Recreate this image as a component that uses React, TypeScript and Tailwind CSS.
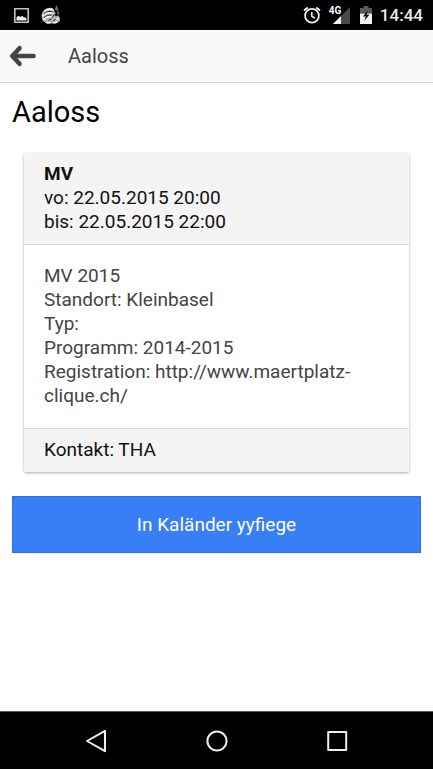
const AlarmIcon = () => (
  <svg viewBox="0 0 18 18" className="h-[18px] w-[18px]" fill="none" stroke="#f0f0f0" aria-hidden="true">
    <circle cx="9" cy="9.8" r="6.9" strokeWidth="1.8" />
    <path d="M1 4.6 4.8 1.4M17 4.6l-3.8-3.2" strokeWidth="2" />
    <path d="M8.8 6v4.2l3.2 1.9" strokeWidth="1.5" />
  </svg>
);

const SignalIcon = () => (
  <svg viewBox="0 0 17 17" className="h-[17px] w-[17px]" aria-hidden="true">
    <path d="M17 0v17H0z" fill="#4a4a4a" />
    <path d="M8 9v8H0z" fill="#f2f2f2" />
  </svg>
);

const BatteryIcon = () => (
  <svg viewBox="0 0 12 18" className="h-[18px] w-3" aria-hidden="true">
    <path d="M3.5 0h5v2H12v5.500H0V2h3.500z" fill="#5a5a5a" />
    <path d="M0 7.500h12V18H0z" fill="#f2f2f2" />
    <path d="M7.600 4.400 3 10.600h2.800L4.400 14.800 9.400 8.800H6.600z" fill="#000" />
  </svg>
);

const PictureIcon = () => (
  <svg viewBox="0 0 15 15" className="h-[15px] w-[15px]" aria-hidden="true">
    <path d="M.8.8h13.4v13.4H.8z" fill="none" stroke="#c4c4c4" strokeWidth="1.6" />
    <path d="M2.5 12.6V9.2l2-1.4 1.8 1.2 2-1.2 1.6 1.8 1.4-.4 1.2 1.6v1.8z" fill="#f0f0f0" />
  </svg>
);

const CliqueIcon = () => (
  <svg viewBox="0 0 20 20" className="h-5 w-5" fill="none" aria-hidden="true">
    <path d="M.6 11.500C.6 6 5 2.800 9 2.800c3 0 4.600 1.800 4.600 4.200l3.600 3.600c1.800 1.600 2.200 4 1.400 6l-4.200 1.800-8.800.2-4.200-3z" fill="#b4b4b4" />
    <path d="M3.200 6.600C6 4 9 3.600 12 4.800M1.400 11C3.600 8 7 7 11.800 8M2.600 15c1.800-3 4.400-4 8.400-3.400" stroke="#f6f6f6" strokeWidth="1.8" />
    <path d="M2.600 8.800c2.600-2.400 5.400-2.800 9-2M3 12.800c2.200-2.400 4.800-3 7.600-2.600M11 12.600l2.600-3.400M7.400 15.400l3-1.400M12 16.400l2.600-2.200" stroke="#202020" strokeWidth="1" />
    <path d="M15.600.8v5M14 3.600l3.400.6M17 6v4.400" stroke="#6e6e6e" strokeWidth="1.6" />
    <circle cx="15.400" cy="9.800" r="1.500" fill="#111" />
    <path d="M5.600 17.600h3.600M12.400 17.600l4-.4M15.600 13.400l2.200.8" stroke="#f6f6f6" strokeWidth="1.600" />
  </svg>
);

const StatusBar = () => (
  <div className="flex h-[30px] shrink-0 items-center justify-between bg-black pr-2.5 pl-3.5 text-white">
    <div className="flex items-center gap-3">
      <PictureIcon />
      <CliqueIcon />
    </div>
    <div className="flex items-center">
      <AlarmIcon />
      <div className="relative ml-3">
        <SignalIcon />
        <span className="absolute -top-0.5 -left-1 text-[10px] leading-3 font-bold">4G</span>
      </div>
      <div className="ml-2.5">
        <BatteryIcon />
      </div>
      <span className="ml-2 text-[17px] leading-6 font-medium text-[#eaeaea]">14:44</span>
    </div>
  </div>
);

const Header = ({ title }: { title: string }) => (
  <header className="flex h-[53px] shrink-0 items-center border-b border-[#d9d9d9] bg-[#f8f8f8] pl-2">
    <button type="button" aria-label="Zrugg" className="flex w-[60px] items-center">
      <svg
        viewBox="0 0 30 22"
        className="h-[22px] w-[30px]"
        fill="none"
        stroke="#444"
        strokeWidth="4.6"
        strokeLinecap="round"
        strokeLinejoin="round"
        aria-hidden="true"
      >
        <path d="M11.5 3.3 4.3 11l7.2 7.7M4.3 11h21.2" />
      </svg>
    </button>
    <span className="text-xl text-[#444]">{title}</span>
  </header>
);

const event = {
  name: 'MV',
  from: '22.05.2015 20:00',
  to: '22.05.2015 22:00',
  details: [
    'MV 2015',
    'Standort: Kleinbasel',
    'Typ:',
    'Programm: 2014-2015',
    'Registration: http://www.maertplatz-clique.ch/',
  ],
  contact: 'THA',
};

const EventCard = () => (
  <section className="mx-3 overflow-hidden rounded-xs bg-white shadow-[0_1px_3px_rgba(0,0,0,0.35)]">
    <div className="border-b border-[#d9d9d9] bg-[#f4f4f4] px-5 pt-[9px] pb-2.5 text-[#111]">
      <h2 className="font-bold">{event.name}</h2>
      <p>{`vo: ${event.from}`}</p>
      <p>{`bis: ${event.to}`}</p>
    </div>
    <div className="border-b border-[#d9d9d9] px-5 pt-[19px] pb-5 text-[#444]">
      {event.details.map((line) => (
        <p key={line}>{line}</p>
      ))}
    </div>
    <div className="bg-[#f4f4f4] px-5 pt-[9px] pb-2.5 text-[#111]">{`Kontakt: ${event.contact}`}</div>
  </section>
);

const NavigationBar = () => (
  <nav className="flex h-[58px] shrink-0 items-center justify-center gap-24 border-t border-[#555] bg-black">
    <button type="button" aria-label="Back">
      <svg viewBox="0 0 24 24" className="h-6 w-6" fill="none" stroke="#eee" strokeWidth="2" strokeLinejoin="round">
        <path d="M20 1.8v20.4L2 12z" />
      </svg>
    </button>
    <button type="button" aria-label="Home">
      <svg viewBox="0 0 24 24" className="h-6 w-6" fill="none" stroke="#eee" strokeWidth="2">
        <circle cx="12" cy="12" r="9.6" />
      </svg>
    </button>
    <button type="button" aria-label="Overview">
      <svg viewBox="0 0 24 24" className="h-6 w-6" fill="none" stroke="#eee" strokeWidth="2" strokeLinejoin="round">
        <path d="M3.2 3h18v18h-18z" />
      </svg>
    </button>
  </nav>
);

export default function App() {
  return (
    <div className="flex min-h-screen flex-col bg-white font-[Roboto,sans-serif]">
      <StatusBar />
      <Header title="Aaloss" />
      <main className="flex-1 px-3 pt-3 text-[19px] leading-6">
        <h1 className="mb-6 text-[29px] leading-[34px] text-black">Aaloss</h1>
        <EventCard />
        <button
          type="button"
          className="mt-6 h-[57px] w-full border border-[#2f6fe0] bg-[#387ef5] text-center text-white"
        >
          In Kaländer yyfiege
        </button>
      </main>
      <NavigationBar />
    </div>
  );
}
